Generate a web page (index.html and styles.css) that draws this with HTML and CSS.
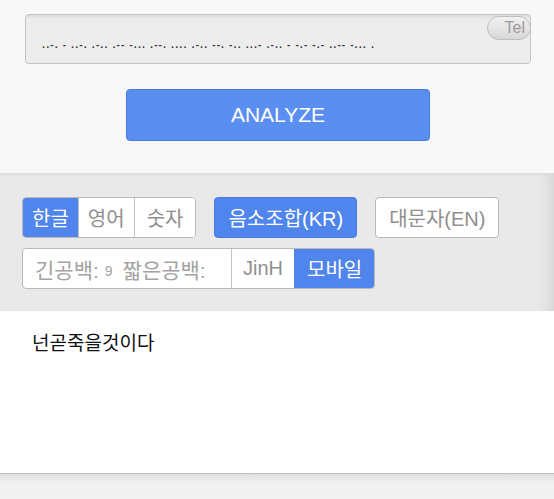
FILE: index.html
```html
<!DOCTYPE html>
<html>
    <head>
        <meta charset="UTF-8">
        <title>모스부호</title>
        <link rel="stylesheet" href="styles.css">
    </head>
    <body>
        <div class="top">
            <div class="code-box">
                <span class="code">..-. - ..-. .-.. .-- -... .--. .... .-.. --. -.. ...- .-.. - -.- -.- ..-- -... .</span>
                <span class="tel">Tel</span>
            </div>
            <button class="analyze">ANALYZE</button>
        </div>

        <div class="options">
            <div class="row">
                <div class="group">
                    <button class="btn on">한글</button>
                    <button class="btn">영어</button>
                    <button class="btn">숫자</button>
                </div>
                <button class="btn single on">음소조합(KR)</button>
                <button class="btn single">대문자(EN)</button>
            </div>
            <div class="row">
                <div class="group">
                    <div class="field">
                        <span class="label">긴공백:</span><span class="num">9</span>
                        <span class="label">짧은공백:</span>
                    </div>
                    <button class="btn">JinH</button>
                    <button class="btn on">모바일</button>
                </div>
            </div>
        </div>

        <div class="result">
            <p>넌곧죽을것이다</p>
        </div>
        <div class="bottom"></div>
    </body>
</html>
```

FILE: styles.css
```css
* {
    margin: 0;
    padding: 0;
    box-sizing: border-box;
}

html, body {
    width: 100%;
    height: 100%;
}

body {
    font-family: "Liberation Sans", "Noto Sans CJK KR", sans-serif;
    background-color: #f7f7f7;
    overflow: hidden;
}

button {
    font-family: inherit;
}

.top {
    padding: 14px 23px 0 25px;
    height: 173px;
    background-color: #f8f8f8;
}

.code-box {
    position: relative;
    height: 50px;
    border: 1px solid #c4c4c4;
    border-radius: 4px;
    background: linear-gradient(#dcdcdc, #ececec 4px, #ededed);
    padding: 19px 0 0 16px;
}

.code {
    font-size: 8px;
    letter-spacing: 1.1px;
    color: #333;
    font-family: "DejaVu Sans", sans-serif;
    font-weight: bold;
}

.tel {
    position: absolute;
    top: 1px;
    right: -1px;
    width: 44px;
    height: 24px;
    border: 1px solid #bdbdbd;
    border-radius: 12px;
    background: linear-gradient(#f2f2f2, #d7d7d7);
    color: #9a9a9a;
    font-size: 16px;
    line-height: 22px;
    text-align: right;
    padding-right: 5px;
}

.analyze {
    display: block;
    width: 304px;
    height: 52px;
    margin: 25px auto 0 101px;
    background-color: #5a8ef0;
    border: 1px solid #4a7bd8;
    border-radius: 4px;
    color: #fff;
    font-size: 21px;
}

.options {
    height: 138px;
    background-color: #e9e9e9;
    box-shadow: inset 0 3px 4px -2px #d8d8d8, inset -14px 0 14px -10px #d4d4d4;
    padding: 24px 0 0 22px;
    display: flex;
    flex-direction: column;
    gap: 10px;
}

.row {
    display: flex;
    gap: 18px;
}

.group {
    display: flex;
    height: 41px;
    border: 1px solid #b9b9b9;
    border-radius: 4px;
    overflow: hidden;
    background-color: #fff;
}

.btn {
    height: 41px;
    padding: 0 9px;
    background-color: #fff;
    border: none;
    border-left: 1px solid #c4c4c4;
    color: #8f8f8f;
    font-size: 20px;
}

.group .btn {
    height: 39px;
}

.group .btn:first-child {
    border-left: none;
}

.group .btn:last-child {
    padding: 0 12px;
}

.btn.on {
    background-color: #4f85ec;
    color: #fff;
}

.group .btn.on {
    border-left-color: #4f85ec;
}

.single {
    border: 1px solid #b9b9b9;
    border-radius: 4px;
    padding: 0 13px;
}

.single.on {
    border-color: #4a7bd8;
}

.row:last-child .btn {
    padding: 0 11px;
}

.row:last-child .btn.on {
    padding: 0 12px;
}

.field {
    width: 208px;
    padding-left: 12px;
    display: flex;
    align-items: center;
    color: #a3a3a3;
    font-size: 21px;
}

.field .num {
    font-size: 14px;
    margin: 4px 10px 0 6px;
}

.result {
    height: 162px;
    background-color: #fff;
    padding: 17px 0 0 32px;
}

.result p {
    font-size: 19px;
    color: #111;
    font-family: "Noto Sans CJK KR", sans-serif;
}

.bottom {
    height: 26px;
    border-top: 1px solid #bdbdbd;
    background: linear-gradient(#dedede, #f0f0f0 8px, #f2f2f2);
}
```
